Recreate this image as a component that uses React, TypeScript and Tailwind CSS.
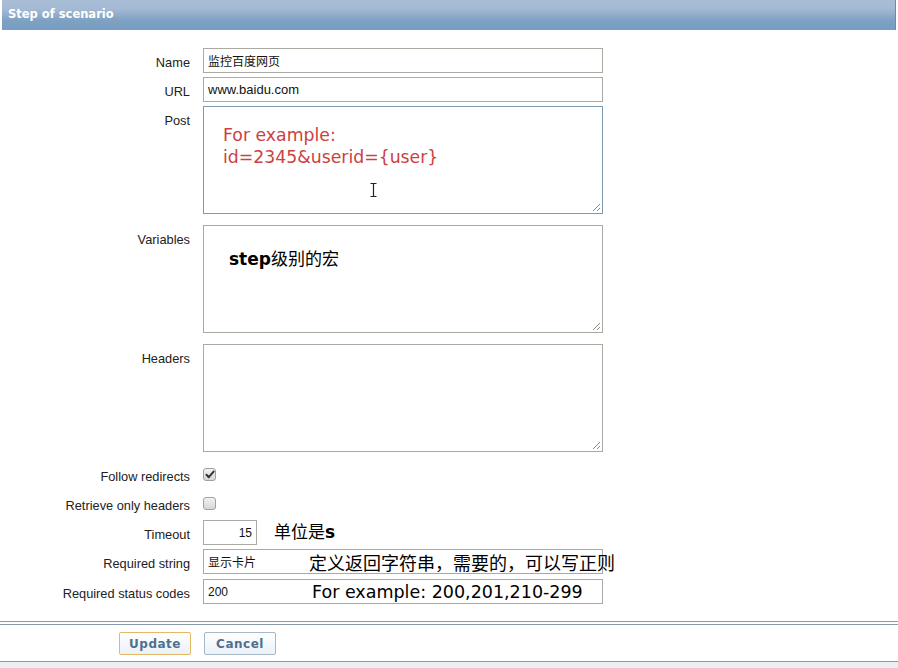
import React from "react";

const Grip = () => (
  <svg className="absolute right-[1px] bottom-[1px]" width="9" height="9" viewBox="0 0 9 9">
    <line x1="8" y1="1" x2="1" y2="8" stroke="#8a8a8a" strokeWidth="1" />
    <line x1="8" y1="5" x2="5" y2="8" stroke="#8a8a8a" strokeWidth="1" />
  </svg>
);

const Label = ({ children, top }: { children: React.ReactNode; top?: boolean }) => (
  <div
    className={`w-[190px] shrink-0 text-right text-[12.8px] text-[#222] leading-[15px] ${top ? "pt-[7px]" : "pt-[3px]"}`}
  >
    {children}
  </div>
);

const CheckBox = ({ checked }: { checked?: boolean }) => (
  <div className="w-[13px] h-[13px] rounded-[3px] border border-[#a0a0a0] bg-[linear-gradient(to_bottom,#f2f2f2,#d6d6d6)] flex items-center justify-center">
    {checked && (
      <svg width="10" height="9" viewBox="0 0 10 9">
        <path d="M1.5 4.8 L3.8 7.2 L8.6 1.6" fill="none" stroke="#333" strokeWidth="2" strokeLinecap="round" strokeLinejoin="round" />
      </svg>
    )}
  </div>
);

export default function App() {
  const cjk = "font-['DejaVu_Sans','Noto_Sans_CJK_SC',sans-serif]";
  return (
    <div className="w-[898px] h-[668px] bg-white relative overflow-hidden font-['Liberation_Sans','Noto_Sans_CJK_SC',sans-serif]">
      {/* Header */}
      <div className="mx-[2px] h-[30px] border-r border-[#6f8aa3] bg-[linear-gradient(to_bottom,#a9bdd6_0%,#a4b9d3_30%,#7ea1c3_68%,#789dc0_100%)] flex items-center pl-[6px]">
        <span className="font-['DejaVu_Sans',sans-serif] font-bold text-[11.5px] text-white">Step of scenario</span>
      </div>

      {/* Form */}
      <div className="pt-[18px] flex flex-col">
        {/* Name */}
        <div className="flex items-center gap-[13px] h-[25px] mb-[4px]">
          <Label>Name</Label>
          <div className="w-[400px] h-[25px] border border-[#aaaaa2] flex items-center pl-[4px] text-[12px] text-[#111] font-['Noto_Sans_CJK_SC',sans-serif]">
            监控百度网页
          </div>
        </div>
        {/* URL */}
        <div className="flex items-center gap-[13px] h-[25px] mb-[4px]">
          <Label>URL</Label>
          <div className="w-[400px] h-[25px] border border-[#aaaaa2] flex items-center pl-[4px] text-[13px] text-[#111]">
            www.baidu.com
          </div>
        </div>
        {/* Post */}
        <div className="flex items-start gap-[13px] h-[108px] mb-[11px]">
          <Label top>Post</Label>
          <div className="relative w-[400px] h-[108px] border border-[#7f9aae] pl-[19px] pt-[17px]">
            <div className={`${cjk} text-[17.3px] leading-[22px] text-[#cc4141]`}>
              For example:
              <br />
              id=2345&amp;userid={"{user}"}
            </div>
            <svg className="absolute left-[166px] top-[76px]" width="7" height="14" viewBox="0 0 7 14">
              <path d="M0.5 0.5 H6.5 M3.5 0.5 V13.5 M0.5 13.5 H6.5" stroke="#222" strokeWidth="1.2" fill="none" />
            </svg>
            <Grip />
          </div>
        </div>
        {/* Variables */}
        <div className="flex items-start gap-[13px] h-[108px] mb-[11px]">
          <Label top>Variables</Label>
          <div className="relative w-[400px] h-[108px] border border-[#aaaaa2] pl-[25px] pt-[22px]">
            <div className={`${cjk} text-[17px] leading-[22px] text-black`}>
              <span className="font-bold">step</span>级别的宏
            </div>
            <Grip />
          </div>
        </div>
        {/* Headers */}
        <div className="flex items-start gap-[13px] h-[108px] mb-[8px]">
          <Label top>Headers</Label>
          <div className="relative w-[400px] h-[108px] border border-[#aaaaa2]">
            <Grip />
          </div>
        </div>
        {/* Follow redirects */}
        <div className="flex items-center gap-[13px] h-[29px]">
          <Label>Follow redirects</Label>
          <CheckBox checked />
        </div>
        {/* Retrieve only headers */}
        <div className="flex items-center gap-[13px] h-[29px]">
          <Label>Retrieve only headers</Label>
          <CheckBox />
        </div>
        {/* Timeout */}
        <div className="flex items-center gap-[13px] h-[25px] mt-[2px] mb-[4px]">
          <Label>Timeout</Label>
          <div className="w-[54px] h-[25px] border border-[#aaaaa2] flex items-center justify-end pr-[4px] text-[12px] text-[#111]">
            15
          </div>
          <div className={`${cjk} ml-[4px] text-[17px] text-black`}>
            单位是<span className="font-bold">s</span>
          </div>
        </div>
        {/* Required string */}
        <div className="flex items-center gap-[13px] h-[25px] mb-[5px]">
          <Label>Required string</Label>
          <div className="relative w-[400px] h-[25px] border border-[#aaaaa2] flex items-center pl-[4px] text-[12px] text-[#111] font-['Noto_Sans_CJK_SC',sans-serif]">
            显示卡片
            <span className={`absolute left-[105px] top-[2px] whitespace-nowrap ${cjk} text-[18px] leading-[24px] text-black`}>
              定义返回字符串，需要的，可以写正则
            </span>
          </div>
        </div>
        {/* Required status codes */}
        <div className="flex items-center gap-[13px] h-[25px]">
          <Label>Required status codes</Label>
          <div className="relative w-[400px] h-[25px] border border-[#aaaaa2] flex items-center pl-[4px] text-[12px] text-[#111]">
            200
            <span className={`absolute left-[108px] top-[0px] whitespace-nowrap ${cjk} text-[17.5px] leading-[24px] text-black`}>
              For example: 200,201,210-299
            </span>
          </div>
        </div>
      </div>

      {/* Footer */}
      <div className="mt-[17px] border-t border-[#8a9ba8] pt-[2px]">
        <div className="border-t border-[#8a9ba8]"></div>
        <div className="flex items-start h-[36px] pt-[7px] pl-[119px] gap-[13px]">
          <button className="w-[72px] h-[23px] rounded-[2px] border border-[#e6b766] bg-[linear-gradient(to_bottom,#ffffff,#eaf1f8)] font-['DejaVu_Sans',sans-serif] font-bold text-[12px] text-[#4f6f8f] tracking-[0.5px]">
            Update
          </button>
          <button className="w-[72px] h-[23px] rounded-[2px] border border-[#a7b7c7] bg-[linear-gradient(to_bottom,#ffffff,#eaf1f8)] font-['DejaVu_Sans',sans-serif] font-bold text-[12px] text-[#4f6f8f] tracking-[0.5px]">
            Cancel
          </button>
        </div>
        <div className="border-t border-[#8a9ba8] h-[10px] bg-[#eceff2]"></div>
      </div>
    </div>
  );
}
